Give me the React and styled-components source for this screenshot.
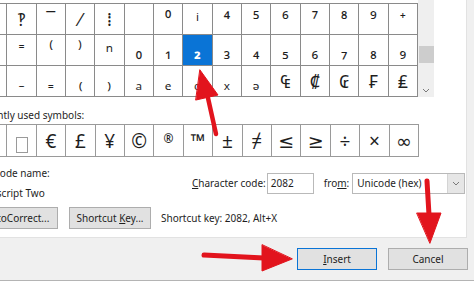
import styled, { createGlobalStyle } from "styled-components";

const GlobalStyle = createGlobalStyle`
  html, body {
    margin: 0;
    padding: 0;
    background: #fff;
  }
  body {
    font-family: "Noto Sans", "DejaVu Sans", sans-serif;
    color: #1e1e1e;
  }
`;

const rows = [
  ["‼", "‽", "‾", "⁄", "⁞", "", "⁰", "ⁱ", "⁴", "⁵", "⁶", "⁷", "⁸", "⁹", "⁺"],
  ["⁻", "⁼", "⁽", "⁾", "ⁿ", "₀", "₁", "₂", "₃", "₄", "₅", "₆", "₇", "₈", "₉"],
  ["₊", "₋", "₌", "₍", "₎", "ₐ", "ₑ", "ₒ", "ₓ", "ₔ", "₠", "₡", "₢", "₣", "₤"],
];

const recent = ["", "□", "€", "£", "¥", "©", "®", "™", "±", "≠", "≤", "≥", "÷", "×", "∞"];

const Frame = styled.div`
  position: relative;
  width: 474px;
  height: 285px;
  overflow: hidden;
  background: #fff;
`;

const Dialog = styled.div`
  margin-left: -24px;
  width: 498px;
  height: 281px;
  box-sizing: border-box;
  background: #f0f0f0;
  border-bottom: 1px solid #b4b4b4;
  display: flex;
  flex-direction: column;
`;

const Panel = styled.div`
  width: 491px;
  height: 238px;
  flex: none;
  box-sizing: border-box;
  background: #fff;
  border-right: 1px solid #e2e2e2;
  border-bottom: 1px solid #e2e2e2;
  display: flex;
  flex-direction: column;
`;

const GridArea = styled.div`
  display: flex;
  align-items: flex-start;
  margin-left: 2px;
`;

const Grid = styled.div`
  margin-top: 3px;
  width: 440px;
  display: grid;
  grid-template-columns: repeat(15, 1fr);
  grid-auto-rows: 30px;
  gap: 1px;
  padding: 0 1px 1px 0;
  box-sizing: border-box;
  background: #8a8a8a;
  border-top: 1px solid #8a8a8a;
`;

const Cell = styled.div`
  background: ${(p) => (p.$selected ? "#0a74d6" : "#fff")};
  color: ${(p) => (p.$selected ? "#fff" : "#1e1e1e")};
  font-weight: ${(p) => (p.$selected ? 700 : 400)};
  font-size: 18px;
  line-height: 30px;
  text-align: center;
  overflow: hidden;
`;

const Scrollbar = styled.div`
  width: 16px;
  height: 97px;
  background: #efefef;
  display: flex;
  flex-direction: column;
  align-items: center;
`;

const Thumb = styled.div`
  margin-top: 46px;
  width: 15px;
  height: 17px;
  background: #cdcdcd;
`;

const ScrollArrow = styled.svg`
  margin-top: auto;
  margin-bottom: 4px;
`;

const SectionLabel = styled.div`
  margin: 11px 0 2px -1px;
  font-size: 10px;
  line-height: 14px;
`;

const RecentRow = styled.div`
  margin-left: 2px;
  width: 441px;
  display: grid;
  grid-template-columns: repeat(15, 1fr);
  height: 33px;
  gap: 1px;
  padding: 1px 1px 1px 0;
  box-sizing: border-box;
  background: #9a9a9a;
`;

const RecentCell = styled.div`
  background: #fff;
  font-size: ${(p) => (p.$raised ? 12 : 19)}px;
  display: flex;
  align-items: ${(p) => (p.$raised ? "flex-start" : "center")};
  justify-content: center;
  padding-top: ${(p) => (p.$raised ? 5 : 0)}px;
  font-weight: ${(p) => (p.$raised ? 600 : 400)};
`;

const MissingGlyph = styled.span`
  width: 10px;
  height: 14px;
  margin-top: 8px;
  border: 1px solid #9a9a9a;
`;

const Details = styled.div`
  margin-top: 6px;
  display: flex;
  align-items: center;
  font-size: 10px;
  white-space: nowrap;
`;

const NameBlock = styled.div`
  width: 216px;
  flex: none;
  padding-left: 3px;
  box-sizing: border-box;
  line-height: 20px;
`;

const CodeGroup = styled.div`
  display: flex;
  flex: none;
  align-items: center;
`;

const FieldLabel = styled.span`
  margin-right: ${(p) => p.$gap || 1}px;
`;

const CodeInput = styled.div`
  width: 47px;
  height: 21px;
  box-sizing: border-box;
  border: 1px solid #b9b9b9;
  padding-left: 3px;
  line-height: 19px;
  margin-right: 10px;
  background: #fff;
`;

const Select = styled.div`
  width: 113px;
  height: 21px;
  box-sizing: border-box;
  border: 1px solid #b9b9b9;
  display: flex;
  align-items: stretch;
  background: #fff;
`;

const SelectText = styled.span`
  flex: 1;
  padding-left: 4px;
  line-height: 19px;
`;

const SelectButton = styled.span`
  width: 16px;
  background: #e6e6e6;
  border-left: 1px solid #d4d4d4;
  display: flex;
  align-items: center;
  justify-content: center;
`;

const ActionRow = styled.div`
  margin-top: 4px;
  display: flex;
  align-items: center;
  font-size: 10px;
  white-space: nowrap;
`;

const Button = styled.button`
  width: ${(p) => p.$w || 82}px;
  height: 22px;
  flex: none;
  margin-right: ${(p) => p.$mr || 0}px;
  padding: 0;
  font-family: inherit;
  font-size: 10px;
  color: #1e1e1e;
  background: #e1e1e1;
  border: 1px solid ${(p) => (p.$default ? "#0a74d6" : "#adadad")};
`;

const Footer = styled.div`
  flex: 1;
  display: flex;
  justify-content: flex-end;
  align-items: flex-start;
  padding: 10px 6px 0 0;
`;

const Overlay = styled.svg`
  position: absolute;
  left: 0;
  top: 0;
  pointer-events: none;
`;

const Chevron = () => (
  <svg width="8" height="5" viewBox="0 0 8 5">
    <path d="M1 1 L4 4 L7 1" fill="none" stroke="#7a7a7a" strokeWidth="1" />
  </svg>
);

export default function App() {
  return (
    <>
      <GlobalStyle />
      <Frame>
        <Dialog>
          <Panel>
            <GridArea>
              <Grid>
                {rows.map((row, r) =>
                  row.map((ch, c) => (
                    <Cell key={`${r}-${c}`} $selected={r === 1 && c === 7}>
                      {ch}
                    </Cell>
                  ))
                )}
              </Grid>
              <Scrollbar>
                <Thumb />
                <ScrollArrow width="8" height="5" viewBox="0 0 8 5">
                  <path d="M1 1 L4 4 L7 1" fill="none" stroke="#7a7a7a" strokeWidth="1" />
                </ScrollArrow>
              </Scrollbar>
            </GridArea>

            <SectionLabel>Recently used symbols:</SectionLabel>
            <RecentRow>
              {recent.map((ch, i) => (
                <RecentCell key={i} $raised={ch === "®"}>
                  {ch === "□" ? <MissingGlyph /> : ch}
                </RecentCell>
              ))}
            </RecentRow>

            <Details>
              <NameBlock>
                <div>Unicode name:</div>
                <div>Subscript Two</div>
              </NameBlock>
              <CodeGroup>
                <FieldLabel>
                  <u>C</u>haracter code:
                </FieldLabel>
                <CodeInput>2082</CodeInput>
                <FieldLabel $gap={3}>
                  fro<u>m</u>:
                </FieldLabel>
                <Select>
                  <SelectText>Unicode (hex)</SelectText>
                  <SelectButton>
                    <Chevron />
                  </SelectButton>
                </Select>
              </CodeGroup>
            </Details>

            <ActionRow>
              <Button $mr={11}>
                <u>A</u>utoCorrect...
              </Button>
              <Button $mr={10}>
                Shortcut <u>K</u>ey...
              </Button>
              <span>Shortcut key: 2082, Alt+X</span>
            </ActionRow>
          </Panel>

          <Footer>
            <Button $w={80} $mr={11} $default>
              <u>I</u>nsert
            </Button>
            <Button $w={80}>Cancel</Button>
          </Footer>
        </Dialog>

        <Overlay width="474" height="285" viewBox="0 0 474 285">
          <g fill="#e2141d" stroke="#e2141d" strokeLinecap="round">
            <line x1="216" y1="134" x2="208" y2="98" strokeWidth="4.5" />
            <polygon points="200,70 218,95 196,100" strokeWidth="1" strokeLinejoin="round" />
            <line x1="427" y1="181" x2="429" y2="215" strokeWidth="5" />
            <polygon points="417,213 441,213 430,243" strokeWidth="1" strokeLinejoin="round" />
            <line x1="204" y1="255" x2="264" y2="258" strokeWidth="5" />
            <polygon points="262,245 262,271 292,259" strokeWidth="1" strokeLinejoin="round" />
          </g>
        </Overlay>
      </Frame>
    </>
  );
}
